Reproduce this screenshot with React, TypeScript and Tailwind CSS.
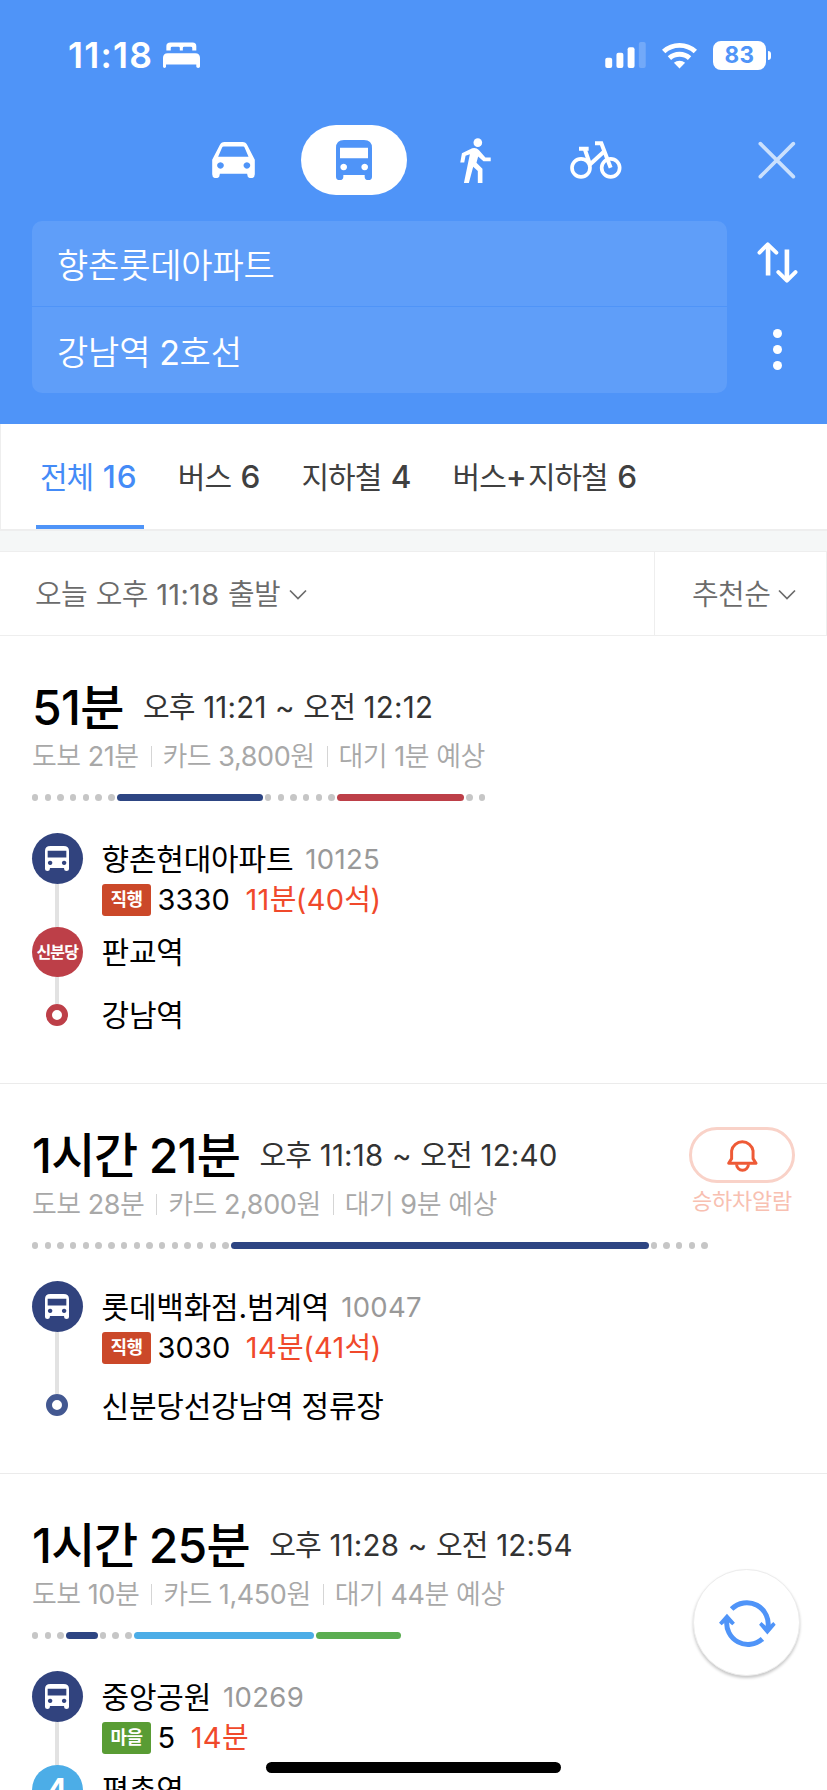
import { Fragment } from "react";
import clsx from "clsx";

type Segment =
  | { kind: "walk"; dots: number }
  | { kind: "ride"; width: number; color: string };

type Stop = {
  name: string;
  marker: "bus" | "line" | "end";
  color: string;
  height: string;
  label?: string;
  labelClass?: string;
  code?: string;
  badge?: { text: string; color: string };
  bus?: string;
  arrival?: string;
};

type Route = {
  duration: string;
  time: string;
  facts: string[];
  segments: Segment[];
  stops: Stop[];
  height: string;
  alarm?: boolean;
};

const TABS = [
  { label: "전체 16", active: true },
  { label: "버스 6" },
  { label: "지하철 4" },
  { label: "버스+지하철 6" },
];

const ROUTES: Route[] = [
  {
    duration: "51분",
    time: "오후 11:21 ~ 오전 12:12",
    facts: ["도보 21분", "카드 3,800원", "대기 1분 예상"],
    height: "h-[448px]",
    segments: [
      { kind: "walk", dots: 7 },
      { kind: "ride", width: 146.5, color: "bg-[#2d4583]" },
      { kind: "walk", dots: 6 },
      { kind: "ride", width: 127.5, color: "bg-[#bd3f48]" },
      { kind: "walk", dots: 2 },
    ],
    stops: [
      {
        name: "향촌현대아파트",
        marker: "bus",
        color: "bg-[#31437e]",
        height: "h-[93.5px]",
        code: "10125",
        badge: { text: "직행", color: "bg-[#cb4829]" },
        bus: "3330",
        arrival: "11분(40석)",
      },
      {
        name: "판교역",
        marker: "line",
        color: "bg-[#bd3f48]",
        height: "h-[77px]",
        label: "신분당",
        labelClass: "text-[16px] tracking-[-0.9px]",
      },
      { name: "강남역", marker: "end", color: "border-[#bd3f48]", height: "h-[22px]" },
    ],
  },
  {
    duration: "1시간 21분",
    time: "오후 11:18 ~ 오전 12:40",
    facts: ["도보 28분", "카드 2,800원", "대기 9분 예상"],
    height: "h-[390px]",
    alarm: true,
    segments: [
      { kind: "walk", dots: 16 },
      { kind: "ride", width: 418, color: "bg-[#2d4583]" },
      { kind: "walk", dots: 5 },
    ],
    stops: [
      {
        name: "롯데백화점.범계역",
        marker: "bus",
        color: "bg-[#31437e]",
        height: "h-[113px]",
        code: "10047",
        badge: { text: "직행", color: "bg-[#cb4829]" },
        bus: "3030",
        arrival: "14분(41석)",
      },
      { name: "신분당선강남역 정류장", marker: "end", color: "border-[#435891]", height: "h-[22px]" },
    ],
  },
  {
    duration: "1시간 25분",
    time: "오후 11:28 ~ 오전 12:54",
    facts: ["도보 10분", "카드 1,450원", "대기 44분 예상"],
    height: "h-[448px]",
    segments: [
      { kind: "walk", dots: 3 },
      { kind: "ride", width: 32, color: "bg-[#2d4583]" },
      { kind: "walk", dots: 3 },
      { kind: "ride", width: 180, color: "bg-[#4cade7]" },
      { kind: "ride", width: 85, color: "bg-[#5bad51]" },
    ],
    stops: [
      {
        name: "중앙공원",
        marker: "bus",
        color: "bg-[#31437e]",
        height: "h-[93.5px]",
        code: "10269",
        badge: { text: "마을", color: "bg-[#599c34]" },
        bus: "5",
        arrival: "14분",
      },
      {
        name: "평촌역",
        marker: "line",
        color: "bg-[#4cade7]",
        height: "h-[77px]",
        label: "4",
        labelClass: "text-[30px]",
      },
    ],
  },
];

function Mixed({ text, latin }: { text: string; latin: string }) {
  return (
    <span className="whitespace-pre">
      {text.split(/([\d:,~()+ ]+)/).map((run, i) =>
        i % 2 ? (
          <span key={i} className={latin}>
            {run}
          </span>
        ) : (
          <Fragment key={i}>{run}</Fragment>
        ),
      )}
    </span>
  );
}

function BedIcon() {
  return (
    <svg viewBox="0 0 110 77" className="h-[26px] w-[37px]" fill="currentColor">
      <path d="M10 25V12Q10 1 22 1H88Q99 1 99 12V25H87V18Q87 14 83 14H63Q59 14 59 18V25H50V18Q50 14 46 14H27Q23 14 23 18V25Z" />
      <path d="M0 47Q0 33 14 33H96Q110 33 110 47V73Q110 77 104.500 77Q99 77 99 73V67H9V73Q9 77 4.500 77Q0 77 0 73Z" />
    </svg>
  );
}

function SignalIcon() {
  return (
    <svg viewBox="0 0 123 79" className="h-[26px] w-[41px]" fill="currentColor">
      <rect x="0" y="48" width="21" height="31" rx="6" />
      <rect x="34" y="33" width="21" height="46" rx="6" />
      <rect x="68" y="16" width="21" height="63" rx="6" />
      <rect x="102" y="0" width="21" height="79" rx="6" opacity="0.2" />
    </svg>
  );
}

function WifiIcon() {
  return (
    <svg viewBox="765 125 106 80" className="h-[27px] w-[35px]" fill="none" stroke="currentColor" strokeWidth="15">
      <path d="M770 153A71 71 0 0 1 866 153" />
      <path d="M787.500 173A45 45 0 0 1 848.500 173" />
      <path d="M818 204L801 187A26 26 0 0 1 835 187Z" fill="currentColor" stroke="none" />
    </svg>
  );
}

function CarIcon() {
  return (
    <svg viewBox="0 0 129 109" className="h-[36px] w-[43px]" fill="currentColor" fillRule="evenodd">
      <path d="M23 9Q27 0 37 0H92Q102 0 106 9L129 54V98a11 11 0 0 1-23 0V96H23V98a11 11 0 0 1-23 0V54ZM35 14Q31 14 30 17L18 45H110L98 17Q97 14 94 14ZM25 61a10 10 0 1 0 .1 0ZM105 61a10 10 0 1 0 .1 0Z" />
    </svg>
  );
}

function BusIcon({ className }: { className: string }) {
  return (
    <svg
      viewBox="0 0 108 120"
      preserveAspectRatio="none"
      className={className}
      fill="currentColor"
      fillRule="evenodd"
    >
      <path d="M0 24Q0 0 24 0H84Q108 0 108 24V110a11 10 0 0 1-22 0V105H22V110a11 10 0 0 1-22 0ZM12 23V55H96V23ZM23 71a10 10 0 1 0 .1 0ZM86 71a10 10 0 1 0 .1 0Z" />
    </svg>
  );
}

function WalkIcon() {
  return (
    <svg viewBox="160 413 92 136" className="h-[45px] w-[31px]" fill="currentColor">
      <circle cx="213" cy="427" r="13" />
      <path d="M160 487L165 459L196 444Q208 441 216 449L236 472H252V483H230L214 469L209 488L227 506V549H213V513L199 500L186 549H171L189 462L176 467L172 487Z" />
    </svg>
  );
}

function BikeIcon() {
  return (
    <svg viewBox="489 426 156 113" className="h-[38px] w-[52px]" fill="none" stroke="currentColor" strokeWidth="11">
      <circle cx="522" cy="506" r="27" />
      <circle cx="611" cy="506" r="27" />
      <path d="M516 449H545M533 449L549 496L592 456M564 432.500H583L611 506" strokeWidth="12" />
    </svg>
  );
}

function CloseIcon() {
  return (
    <svg viewBox="1054 421 114 114" className="size-[38px] text-[#cae0fd]" fill="none" stroke="currentColor" strokeWidth="11" strokeLinecap="round">
      <path d="M1061 429L1160 528M1160 429L1061 528" />
    </svg>
  );
}

function SwapIcon() {
  return (
    <svg viewBox="1049 97 123 124" className="size-[41px]" fill="none" stroke="currentColor" strokeWidth="12" strokeLinecap="round" strokeLinejoin="round">
      <path d="M1056 129L1081 104L1107 129M1113 188L1139 214L1165 188" />
      <path d="M1082 108V198M1139 120V210" strokeWidth="14" strokeLinecap="butt" />
    </svg>
  );
}

function BellIcon() {
  return (
    <svg viewBox="959 115 94 102" className="h-[34px] w-[31px] text-[#ee5a36]" fill="none" stroke="currentColor" strokeWidth="9" strokeLinejoin="round">
      <path d="M964 191L973 177V153A33 33 0 0 1 1038 153V177L1047 191Z" />
      <path d="M988 194a18 18 0 0 0 36 0" />
    </svg>
  );
}

function RefreshIcon() {
  return (
    <svg viewBox="935 415 172 150" className="h-[50px] w-[57px] text-[#4f94f8]" fill="none" stroke="currentColor" strokeWidth="15">
      <path d="M973 445A64.500 64.500 0 0 1 1082 504" />
      <path d="M1066 535A64.500 64.500 0 0 1 959 477" />
      <path d="M1063 484L1056 492L1081 522L1106 492L1099 484L1081 500Z" fill="currentColor" stroke="none" />
      <path d="M943 494L935 486L959 459L983 486L975 494L959 480Z" fill="currentColor" stroke="none" />
    </svg>
  );
}

function Chevron() {
  return (
    <svg viewBox="0 0 18 12" className="h-[12px] w-[18px]" fill="none" stroke="currentColor" strokeWidth="1.7">
      <path d="M1 1.500L9 9.500L17 1.500" />
    </svg>
  );
}

function StatusBar() {
  return (
    <div className="flex h-[110px] items-center pr-[56px] pl-[68px]">
      <span className="w-[95px] pt-[2px] text-[35.5px] font-semibold tracking-[1.2px]">11:18</span>
      <BedIcon />
      <div className="ml-auto flex items-center">
        <SignalIcon />
        <span className="w-[16px]" />
        <WifiIcon />
        <span className="ml-[16px] flex h-[29px] w-[53px] items-center justify-center rounded-[8px] bg-white text-[22.5px] font-bold tracking-[0.5px] text-[#4f94f8]">
          83
        </span>
        <span className="ml-[2px] h-[9px] w-[3px] rounded-r-full bg-white" />
      </div>
    </div>
  );
}

function ModeBar() {
  return (
    <div className="flex h-[100px] items-center pl-[212px]">
      <CarIcon />
      <div className="ml-[46px] flex h-[70px] w-[106px] items-center justify-center rounded-full bg-white text-[#4f94f8]">
        <BusIcon className="h-[40px] w-[36px]" />
      </div>
      <div className="ml-[53px]">
        <WalkIcon />
      </div>
      <div className="ml-[79px]">
        <BikeIcon />
      </div>
      <div className="ml-[136px]">
        <CloseIcon />
      </div>
    </div>
  );
}

function SearchBox() {
  return (
    <div className="flex pt-[11px] pl-[32px]">
      <div className="w-[695px] overflow-hidden rounded-[10px] bg-[#5f9ef9] text-[34px] font-[350] tracking-[-0.2px]">
        <p className="flex h-[86px] items-center border-b border-[#4f94f8] pt-[3px] pl-[25px]">향촌롯데아파트</p>
        <p className="flex h-[86px] items-center pt-[4px] pl-[25px]">
          <Mixed text="강남역 2호선" latin="font-normal tracking-[-0.5px]" />
        </p>
      </div>
      <div className="flex flex-col items-center pt-[21px] pl-[30px]">
        <SwapIcon />
        <div className="flex flex-col gap-[7px] pt-[46px]">
          <span className="size-[9px] rounded-full bg-white" />
          <span className="size-[9px] rounded-full bg-white" />
          <span className="size-[9px] rounded-full bg-white" />
        </div>
      </div>
    </div>
  );
}

function Tabs() {
  return (
    <nav className="flex h-[107px] gap-[30px] border-b-2 border-l border-b-[#eee] border-l-[#eee] pl-[35px] text-[30px] tracking-[-1px] text-[#404040]">
      {TABS.map((tab) => (
        <span
          key={tab.label}
          className={clsx(
            "flex items-center border-b-4 pt-[5px] pr-[6px] pl-[4px]",
            tab.active ? "border-[#4f94f8] text-[#448bf7]" : "border-transparent",
          )}
        >
          <Mixed text={tab.label} latin="text-[31.5px] font-medium tracking-[1.1px]" />
        </span>
      ))}
    </nav>
  );
}

function FilterRow() {
  return (
    <div className="mt-[20px] flex h-[85px] border-y border-[#eee] bg-white text-[29px] font-[350] tracking-[-0.6px] text-[#6b6b6b]">
      <div className="flex w-[655px] items-center gap-[9px] border-r border-[#eee] pt-[2px] pl-[35px]">
        <Mixed text="오늘 오후 11:18 출발" latin="font-normal tracking-[0.3px]" />
        <Chevron />
      </div>
      <div className="flex flex-1 items-center gap-[8px] border-r border-[#eee] pt-[2px] pl-[37px]">
        추천순
        <Chevron />
      </div>
    </div>
  );
}

function Timeline({ segments }: { segments: Segment[] }) {
  return (
    <div className="flex h-[46px] items-center gap-[2px]">
      {segments.map((segment, i) =>
        segment.kind === "walk" ? (
          <div key={i} className="flex gap-[6.3px]">
            {Array.from({ length: segment.dots }, (_, dot) => (
              <span key={dot} className="size-[6.4px] rounded-full bg-[#c6c6c6]" />
            ))}
          </div>
        ) : (
          <span
            key={i}
            className={clsx("h-[7px] rounded-full", segment.color)}
            style={{ width: segment.width }}
          />
        ),
      )}
    </div>
  );
}

function Marker({ stop }: { stop: Stop }) {
  if (stop.marker === "end") {
    return <span className={clsx("size-[22px] flex-none rounded-full border-[6.5px]", stop.color)} />;
  }
  return (
    <span
      className={clsx(
        "flex size-[50.5px] flex-none items-center justify-center rounded-full font-bold text-white",
        stop.color,
      )}
    >
      {stop.marker === "bus" ? (
        <BusIcon className="h-[25px] w-[24px]" />
      ) : (
        <span className={stop.labelClass}>{stop.label}</span>
      )}
    </span>
  );
}

function StopRow({ stop }: { stop: Stop }) {
  const end = stop.marker === "end";
  return (
    <li className={clsx("flex", stop.height)}>
      <div className="flex w-[50.5px] flex-col items-center">
        <Marker stop={stop} />
        {!end && <span className="w-[4px] flex-1 bg-[#e2e2e2]" />}
      </div>
      <div className="pl-[19px] whitespace-nowrap">
        <p className={clsx("flex items-center pt-px text-[30px] leading-none tracking-[-0.2px]", end ? "h-[22px]" : "h-[50.5px]")}>
          {stop.name}
          {stop.code && (
            <span className="pt-px pl-[12px] text-[27.5px] tracking-[0.3px] text-[#999]">{stop.code}</span>
          )}
        </p>
        {stop.badge && (
          <p className="ml-[0.5px] flex h-[32px] items-center text-[29px] leading-none tracking-[-0.5px]">
            <span
              className={clsx(
                "flex h-[32px] w-[49px] items-center justify-center rounded-[3px] text-[18px] font-bold text-white",
                stop.badge.color,
              )}
            >
              {stop.badge.text}
            </span>
            <span className="pl-[6.5px] tracking-[0.1px]">{stop.bus}</span>
            <span className="pl-[15.5px] text-[#f0492b]">
              {stop.arrival && <Mixed text={stop.arrival} latin="tracking-[0.3px]" />}
            </span>
          </p>
        )}
      </div>
    </li>
  );
}

function AlarmButton() {
  return (
    <div className="-mt-px flex w-[106px] flex-col items-center">
      <span className="flex h-[56px] w-[106px] items-center justify-center rounded-full border-[3px] border-[#f9d2c8]">
        <BellIcon />
      </span>
      <span className="mt-[6px] text-[22px] leading-[24px] tracking-[-0.2px] whitespace-nowrap text-[#f8c0b1]">승하차알람</span>
    </div>
  );
}

function Facts({ facts }: { facts: string[] }) {
  return (
    <div className="flex h-[39px] items-center pt-[2px] text-[27px] leading-none font-[350] tracking-[-0.6px] text-[#a8a8a8]">
      {facts.map((fact, i) => (
        <span key={fact} className="flex items-center">
          {i > 0 && <span className="mr-[11px] ml-[12px] h-[21px] w-px bg-[#d5d5d5]" />}
          <Mixed text={fact} latin="font-normal tracking-[-0.4px]" />
        </span>
      ))}
    </div>
  );
}

function RouteCard({ route }: { route: Route }) {
  return (
    <article className={clsx("border-b border-[#ebebeb] px-[32px] pt-[43.5px]", route.height)}>
      <div className="flex h-[95px] justify-between">
        <div>
          <div className="flex h-[56px] items-center leading-none">
            <h2 className="text-[48px] font-medium tracking-[-1.5px] text-black">
              <Mixed text={route.duration} latin="tracking-[-0.7px]" />
            </h2>
            <span className="pt-px pl-[20px] text-[29px] tracking-[-0.8px] text-[#333]">
              <Mixed text={route.time} latin="text-[29.5px] tracking-[0.2px]" />
            </span>
          </div>
          <Facts facts={route.facts} />
        </div>
        {route.alarm && <AlarmButton />}
      </div>
      <Timeline segments={route.segments} />
      <ul className="pt-[12.500px]">
        {route.stops.map((stop) => (
          <StopRow key={stop.name} stop={stop} />
        ))}
      </ul>
    </article>
  );
}

export default function App() {
  return (
    <div className="relative h-[1790px] w-[827px] overflow-hidden bg-white font-['Inter','Noto_Sans_CJK_KR',sans-serif] text-black">
      <header className="h-[424px] bg-[#4f94f8] text-white">
        <StatusBar />
        <ModeBar />
        <SearchBox />
      </header>
      <div className="bg-[#f5f7f7]">
        <div className="bg-white">
          <Tabs />
        </div>
        <div className="flow-root">
          <FilterRow />
        </div>
      </div>
      <main>
        {ROUTES.map((route) => (
          <RouteCard key={route.duration} route={route} />
        ))}
      </main>
      <button
        aria-label="새로고침"
        className="absolute top-[1569px] left-[693px] flex size-[107px] items-center justify-center rounded-full border border-[#ececec] bg-white pt-[2px] pl-px shadow-[0_2px_3px_rgba(0,0,0,0.22)]"
      >
        <RefreshIcon />
      </button>
      <div className="absolute top-[1762px] left-[266px] h-[11px] w-[295px] rounded-full bg-black" />
    </div>
  );
}
